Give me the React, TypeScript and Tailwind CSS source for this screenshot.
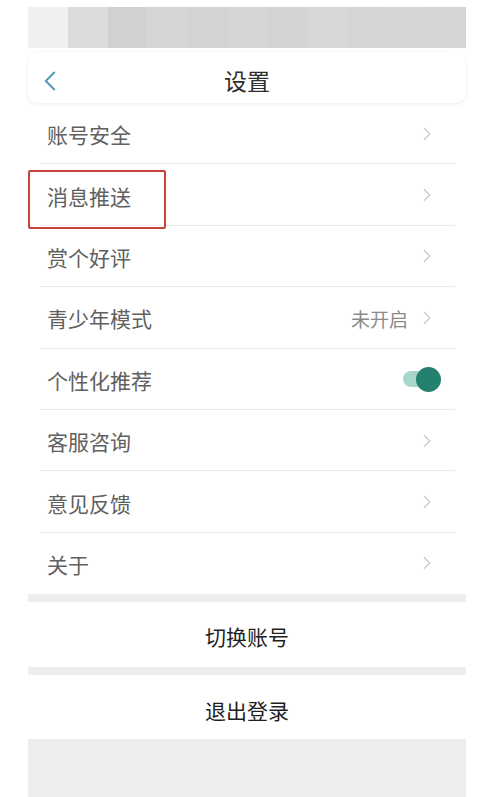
import { ChevronLeft, ChevronRight } from 'lucide-react';

const font = { fontFamily: '"Noto Sans CJK SC", "Noto Sans", sans-serif' };

const rows = [
  { label: '账号安全' },
  { label: '消息推送', marked: true },
  { label: '赏个好评' },
  { label: '青少年模式', value: '未开启' },
  { label: '个性化推荐', toggle: true },
  { label: '客服咨询' },
  { label: '意见反馈' },
  { label: '关于', last: true },
];

const bandShades = ['bg-[#f0f0f0]', 'bg-[#dcdcdc]', 'bg-[#d1d1d1]', 'bg-[#d5d5d5]', 'bg-[#d3d3d3]', 'bg-[#d6d6d6]', 'bg-[#d4d4d4]', 'bg-[#d7d7d7]', 'bg-[#d5d5d5]', 'bg-[#d6d6d6]', 'bg-[#d5d5d5]'];

function Row({ label, value, toggle, marked, last }: { label: string; value?: string; toggle?: boolean; marked?: boolean; last?: boolean }) {
  return (
    <div className="relative h-[61.4px] flex items-center">
      <span className="pl-[19px] pt-[2px] text-[21px] leading-none text-[#606060]">{label}</span>
      <div className="ml-auto pr-[28px] flex items-center gap-[8px]">
        {value && <span className="pt-[2px] text-[19px] leading-none text-[#8a8a8a]">{value}</span>}
        {toggle ? (
          <div className="relative w-[38px] h-[25px] mr-[-3px] flex items-center">
            <div className="w-[30px] h-[16px] rounded-full bg-[#a9d6cc]" />
            <div className="absolute right-0 w-[25px] h-[25px] rounded-full bg-[#24806f]" />
          </div>
        ) : (
          <ChevronRight size={22} strokeWidth={1.3} className="text-[#c8c8c8]" />
        )}
      </div>
      {!last && <div className="absolute bottom-0 left-[12px] right-[11px] h-px bg-[#ececec]" />}
      {marked && <div className="absolute left-0 top-[6px] w-[138px] h-[59px] border-2 border-[#c8413a] rounded-[2px]" />}
    </div>
  );
}

export default function App() {
  return (
    <div className="w-[499px] h-[797px] bg-white overflow-hidden pl-[28px] pr-[33px] pt-[7px]" style={font}>
      <div className="h-[41px] flex">
        {bandShades.map((c, i) => (
          <div key={i} className={`flex-1 ${c}`} />
        ))}
      </div>
      <div className="mt-[4px] h-[51px] rounded-[10px] bg-white shadow-[0_1px_4px_rgba(0,0,0,0.08)] flex items-center relative">
        <ChevronLeft size={34} strokeWidth={1.3} className="absolute left-[5px] top-[12px] text-[#4b98b2]" />
        <span className="mx-auto pt-[6px] text-[23px] leading-none text-[#2e2e2e]">设置</span>
      </div>
      <div>
        {rows.map((r) => (
          <Row key={r.label} {...r} />
        ))}
      </div>
      <div className="h-[8px] bg-[#eeeeee]" />
      <div className="h-[65px] pt-[4px] flex items-center justify-center text-[21px] leading-none text-[#1f1f1f]">切换账号</div>
      <div className="h-[8px] bg-[#eeeeee]" />
      <div className="h-[64px] pt-[6px] flex items-center justify-center text-[21px] leading-none text-[#1f1f1f]">退出登录</div>
      <div className="h-[60px] bg-[#ededed]" />
    </div>
  );
}
